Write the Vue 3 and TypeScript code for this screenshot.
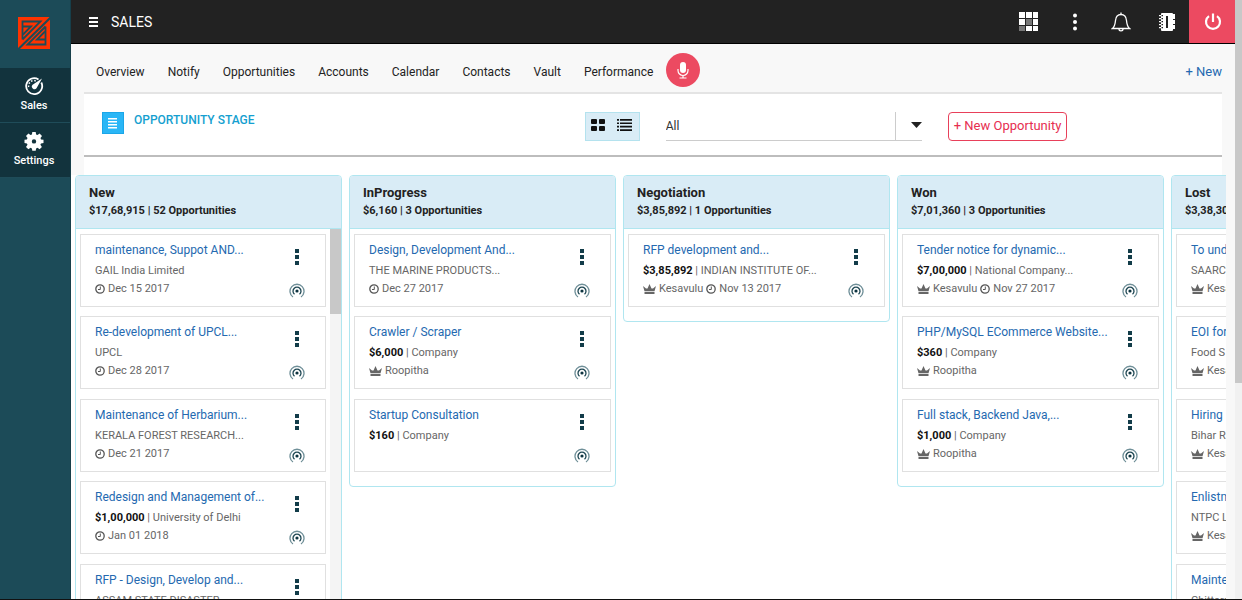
<script setup lang="ts">
import { ref } from 'vue'

interface Deal {
  title: string
  amount?: string
  company: string
  owner?: string
  date?: string
}
interface Stage {
  name: string
  summary: string
  scrolls?: boolean
  deals: Deal[]
}

const tabs = ['Overview', 'Notify', 'Opportunities', 'Accounts', 'Calendar', 'Contacts', 'Vault', 'Performance']
const filter = ref('All')

const stages: Stage[] = [
  {
    name: 'New',
    summary: '$17,68,915 | 52 Opportunities',
    scrolls: true,
    deals: [
      { title: 'maintenance, Suppot AND...', company: 'GAIL India Limited', date: 'Dec 15 2017' },
      { title: 'Re-development of UPCL...', company: 'UPCL', date: 'Dec 28 2017' },
      { title: 'Maintenance of Herbarium...', company: 'KERALA FOREST RESEARCH...', date: 'Dec 21 2017' },
      { title: 'Redesign and Management of...', amount: '$1,00,000', company: 'University of Delhi', date: 'Jan 01 2018' },
      { title: 'RFP - Design, Develop and...', company: 'ASSAM STATE DISASTER' },
    ],
  },
  {
    name: 'InProgress',
    summary: '$6,160 | 3 Opportunities',
    deals: [
      { title: 'Design, Development And...', company: 'THE MARINE PRODUCTS...', date: 'Dec 27 2017' },
      { title: 'Crawler / Scraper', amount: '$6,000', company: 'Company', owner: 'Roopitha' },
      { title: 'Startup Consultation', amount: '$160', company: 'Company' },
    ],
  },
  {
    name: 'Negotiation',
    summary: '$3,85,892 | 1 Opportunities',
    deals: [
      { title: 'RFP development and...', amount: '$3,85,892', company: 'INDIAN INSTITUTE OF...', owner: 'Kesavulu', date: 'Nov 13 2017' },
    ],
  },
  {
    name: 'Won',
    summary: '$7,01,360 | 3 Opportunities',
    deals: [
      { title: 'Tender notice for dynamic...', amount: '$7,00,000', company: 'National Company...', owner: 'Kesavulu', date: 'Nov 27 2017' },
      { title: 'PHP/MySQL ECommerce Website...', amount: '$360', company: 'Company', owner: 'Roopitha' },
      { title: 'Full stack, Backend Java,...', amount: '$1,000', company: 'Company', owner: 'Roopitha' },
    ],
  },
  {
    name: 'Lost',
    summary: '$3,38,30',
    deals: [
      { title: 'To und', company: 'SAARC', owner: 'Kesavulu' },
      { title: 'EOI for', company: 'Food S', owner: 'Kesavulu' },
      { title: 'Hiring', company: 'Bihar R', owner: 'Kesavulu' },
      { title: 'Enlistm', company: 'NTPC L', owner: 'Kesavulu' },
      { title: 'Mainte', company: 'Chittara' },
    ],
  },
]
</script>

<template>
  <div class="app">
    <aside class="side">
      <a class="logo" href="#" aria-label="Home">
        <svg width="32" height="32" viewBox="0 0 32 32">
          <path fill="#ff3300" d="M0 0H32V32H0Z" />
          <path fill="none" stroke="#1c4b58" stroke-width="2" d="M33 0L0 32.500" />
          <path fill="none" stroke="#1c4b58" stroke-width="1.800" d="M4.500 22.500V4.500H22.500L4.500 22.500M27.500 9.500V27.500H9.500L27.500 9.500" />
          <path fill="none" stroke="#1c4b58" stroke-width="1.800" d="M5 9.500H13L5 17.500M27 22.500H19L27 14.500" />
        </svg>
      </a>
      <nav class="side-nav">
        <a class="side-item" href="#">
          <svg width="20" height="20" viewBox="0 0 20 20" fill="none" stroke="#fff">
            <path stroke-width="1.800" d="M17.300 6.500A8 8 0 1 1 14.500 3.400" />
            <path stroke-width="1.500" stroke-dasharray="1.500 1.700" d="M4.700 11A5.300 5.300 0 0 1 12.500 5.300" />
            <path fill="#fff" stroke="none" d="M18 2.500L12.500 12.300A2.600 2.600 0 1 1 8.600 8.700Z" />
          </svg>
          <span>Sales</span>
        </a>
        <a class="side-item" href="#">
          <svg width="20" height="20" viewBox="0 0 20 20">
            <path fill="#fff" fill-rule="evenodd" d="M8.300 1h3.400l.4 2.500 1.400.6L15.600 2.600 18 5l-1.500 2.100.5 1.300 2.500.4v3.200l-2.500.4-.6 1.400L17.900 16l-2.300 2.300-2.100-1.500-1.400.6-.4 2.400H8.300l-.4-2.400-1.400-.6-2.100 1.500L2 16l1.500-2.200-.6-1.400-2.400-.4V8.800l2.400-.4.6-1.300L2 5l2.400-2.400 2.100 1.500 1.400-.6ZM10 8.200a2.200 2.200 0 1 0 0 4.400 2.200 2.200 0 0 0 0-4.400Z" />
          </svg>
          <span>Settings</span>
        </a>
      </nav>
    </aside>

    <div class="body">
      <header class="top">
        <button class="bare burger" aria-label="Menu">
          <svg width="10" height="10" viewBox="0 0 10 10" fill="#fff"><path d="M0 0h9v2H0zM0 4h9v2H0zM0 8h9v2H0z" /></svg>
        </button>
        <h1>SALES</h1>
        <div class="tools">
          <button class="bare tool" aria-label="Apps">
            <svg width="20" height="20" viewBox="0 0 20 20">
              <path fill="#fff" d="M0 0h6v6H0zM7 0h6v6H7zM14 0h5v6h-5zM0 7h6v6H0zM14 7h5v6h-5zM7 14h6v5H7zM14 14h5v5h-5z" />
              <path fill="#777" d="M7 7h6v6H7zM0 14h6v5H0z" />
            </svg>
          </button>
          <button class="bare tool" aria-label="More">
            <svg width="6" height="18" viewBox="0 0 6 18" fill="#fff"><circle cx="3" cy="2.500" r="2" /><circle cx="3" cy="9" r="2" /><circle cx="3" cy="15.500" r="2" /></svg>
          </button>
          <button class="bare tool" aria-label="Notifications">
            <svg width="20" height="20" viewBox="0 0 20 20" fill="none" stroke="#fff" stroke-width="1.300">
              <path d="M1.500 16.500H18.500C16 14.500 15.800 12 15.500 8.500C15.200 5 13 2.500 10 2.500S4.800 5 4.500 8.500C4.200 12 4 14.500 1.500 16.500Z" />
              <path d="M10 2.500V.5M8 17C8 19.500 12 19.500 12 17" />
            </svg>
          </button>
          <button class="bare tool" aria-label="Contacts book">
            <svg width="18" height="20" viewBox="0 0 18 20">
              <rect x="3" y="1" width="12" height="18" rx="1" fill="#fff" />
              <path fill="#fff" d="M1 3h3v1.300H1zM1 6h3v1.300H1zM1 9h3v1.300H1zM1 12h3v1.300H1zM1 15h3v1.300H1zM15 2h2v5h-2zM15 8h2v4h-2zM15 13h2v4h-2z" />
              <path fill="#222" d="M3.500 3h1.500v1.300H3.500zM3.500 6h1.500v1.300H3.500zM3.500 9h1.500v1.300H3.500zM3.500 12h1.500v1.300H3.500zM3.500 15h1.500v1.300H3.500zM8 4h2v12h-2z" />
            </svg>
          </button>
          <button class="bare tool power" aria-label="Sign out">
            <svg width="20" height="20" viewBox="0 0 20 20" fill="none" stroke="#fff" stroke-width="2.200"><path d="M6 4.200A7 7 0 1 0 14 4.200M10 1.500V10" /></svg>
          </button>
        </div>
      </header>

      <nav class="tabs">
        <a v-for="tab in tabs" :key="tab" href="#">{{ tab }}</a>
        <button class="bare mic" aria-label="Voice">
          <svg width="12" height="17" viewBox="0 0 12 17"><rect x="3" y="0" width="6" height="11" rx="3" fill="#fff" /><path fill="none" stroke="#fff" stroke-width="1.200" d="M1 7V8.500A5 5 0 0 0 11 8.500V7M6 13.500V16M2.500 16H9.500" /></svg>
        </button>
        <a class="new" href="#">+ New</a>
      </nav>

      <section class="panel">
        <div class="heading">
          <span class="badge">
            <svg width="10" height="11" viewBox="0 0 10 11" fill="#fff"><path d="M0 0h9v1.500H0zM0 3h9v1.500H0zM0 6h9v1.500H0zM0 9h9v1.500H0z" /></svg>
          </span>
          <h2>OPPORTUNITY STAGE</h2>
        </div>
        <div class="controls">
          <div class="views">
            <button class="bare" aria-label="Board view">
              <svg width="14" height="12" viewBox="0 0 14 12" fill="#111"><rect width="6" height="5" rx="1" /><rect x="8" width="6" height="5" rx="1" /><rect y="7" width="6" height="5" rx="1" /><rect x="8" y="7" width="6" height="5" rx="1" /></svg>
            </button>
            <button class="bare" aria-label="List view">
              <svg width="15" height="12" viewBox="0 0 15 12" fill="#111"><path d="M0 0h2v1.700H0zM3 0h12v1.700H3zM0 3.400h2v1.700H0zM3 3.400h12v1.700H3zM0 6.800h2v1.700H0zM3 6.800h12v1.700H3zM0 10.200h2v1.700H0zM3 10.200h12v1.700H3z" /></svg>
            </button>
          </div>
          <div class="picker">
            <select v-model="filter" aria-label="Filter opportunities">
              <option>All</option>
            </select>
            <span class="caret"><svg width="11" height="6" viewBox="0 0 11 6"><path fill="#222" d="M0 0H11L5.500 6Z" /></svg></span>
          </div>
          <button class="add">+ New Opportunity</button>
        </div>
      </section>

      <main class="board">
        <section v-for="stage in stages" :key="stage.name" class="stage">
          <header class="stage-head">
            <h3>{{ stage.name }}</h3>
            <p>{{ stage.summary }}</p>
          </header>
          <div class="stage-body">
            <div class="cards">
              <article v-for="deal in stage.deals" :key="deal.title" class="card">
                <div class="info">
                  <a class="title" href="#">{{ deal.title }}</a>
                  <p class="company"><template v-if="deal.amount"><b>{{ deal.amount }}</b> | </template>{{ deal.company }}</p>
                  <p class="meta">
                    <span v-if="deal.owner">
                      <svg width="13" height="10" viewBox="0 0 13 10" fill="#666"><path d="M0 2L3 4.500 4.500 4.500 6.500 0 8.500 4.500 10 4.500 13 2 11.500 7.200H1.500ZM1.500 8h10v2h-10z" /></svg>
                      {{ deal.owner }}
                    </span>
                    <span v-if="deal.date">
                      <svg width="10" height="10" viewBox="0 0 10 10" fill="none" stroke="#555"><circle cx="5" cy="5" r="4.200" stroke-width="1.300" /><path d="M5.300 2.500V5.500H3" /></svg>
                      {{ deal.date }}
                    </span>
                  </p>
                </div>
                <div class="actions">
                  <button class="bare" aria-label="Card menu">
                    <svg width="4" height="16" viewBox="0 0 4 16" fill="#123c49"><path d="M0 0h4v4H0zM0 6h4v4H0zM0 12h4v4H0z" /></svg>
                  </button>
                  <button class="bare" aria-label="Activity">
                    <svg width="16" height="16" viewBox="0 0 16 16" fill="none" stroke-width="1.300">
                      <path stroke="#6f8f98" d="M4 14A7 7 0 1 1 12 14" />
                      <path stroke="#1d4652" d="M5.500 11.300A4 4 0 1 1 10.500 11.300" />
                      <circle cx="8" cy="8" r="1.600" fill="#0e3440" />
                    </svg>
                  </button>
                </div>
              </article>
            </div>
            <div v-if="stage.scrolls" class="track"><div class="thumb"></div></div>
          </div>
        </section>
      </main>
    </div>

    <div class="page-track"><div class="page-thumb"></div></div>
  </div>
</template>

<style>
body {
  margin: 0;
}
</style>

<style scoped>
* {
  box-sizing: border-box;
}
.app {
  display: flex;
  height: 100vh;
  overflow: hidden;
  background: #fff;
  border-bottom: 1px solid #111;
  color: #222;
  font-family: Roboto, "Liberation Sans", sans-serif;
  font-size: 12px;
}
h1, h2, h3, p {
  margin: 0;
}
a {
  color: inherit;
  text-decoration: none;
}
svg {
  display: block;
  flex: none;
}
.bare {
  display: flex;
  align-items: center;
  justify-content: center;
  padding: 0;
  border: 0;
  background: none;
}
.side {
  flex: 0 0 71px;
  background: #1c4b58;
  border-right: 1px solid #173f4a;
}
.logo {
  display: flex;
  justify-content: center;
  padding: 17px 2px 19px 0;
}
.side-item {
  display: flex;
  flex-direction: column;
  align-items: center;
  gap: 2px;
  height: 55px;
  padding: 8px 2px 0 0;
  background: #12333d;
  border-bottom: 1px solid #1f4c59;
  color: #fff;
  font-size: 11px;
  font-weight: 500;
  line-height: 16px;
}
.body {
  display: flex;
  flex: 1;
  flex-direction: column;
  min-width: 0;
  background: #f8f8f8;
}
.top {
  display: flex;
  flex: 0 0 44px;
  align-items: center;
  padding-left: 18px;
  background: #222;
  border-bottom: 1px solid #000;
  color: #fff;
}
h1 {
  margin-left: 12px;
  font-size: 14px;
  font-weight: 400;
  line-height: 20px;
}
.tools {
  display: flex;
  align-self: stretch;
  margin-left: auto;
}
.tool {
  width: 46px;
  padding-left: 2px;
}
.power {
  background: #ec4a61;
}
.tabs {
  display: flex;
  flex: 0 0 50px;
  align-items: center;
  gap: 23px;
  margin: 0 13px;
  padding: 8px 0 0 12px;
  border-bottom: 2px solid #e4e4e4;
  font-size: 12px;
  line-height: 20px;
}
.tabs .mic {
  width: 34px;
  height: 34px;
  margin: -4px 0 0 -10px;
  border-radius: 50%;
  background: #ec4a61;
}
.new {
  margin-left: auto;
  color: #2469b0;
  font-size: 13px;
}
.panel {
  display: grid;
  flex: 0 0 63px;
  grid-template-columns: 44fr 56fr;
  margin: 0 13px;
  padding-top: 18px;
  background: #fff;
  border-bottom: 2px solid #bdbdbd;
}
.heading {
  display: flex;
  gap: 10px;
  padding-left: 18px;
}
.badge {
  display: flex;
  align-items: center;
  justify-content: center;
  width: 22px;
  height: 22px;
  background: #29b6f6;
  border: 1px solid #1ba6e8;
}
h2 {
  color: #159fd0;
  font-size: 12px;
  font-weight: 500;
  line-height: 16px;
}
.controls {
  display: flex;
  align-items: flex-start;
  gap: 26px;
}
.views {
  display: flex;
  width: 55px;
  height: 29px;
  background: #d9ecf6;
  border: 1px solid #b4e2ee;
}
.views button {
  flex: 1;
  padding: 0 1px 4px 0;
}
.picker {
  display: flex;
  flex: 0 1 256px;
  position: relative;
  border-bottom: 1px solid #ccc;
}
select {
  width: 100%;
  height: 28px;
  padding: 0;
  appearance: none;
  background: none;
  border: 0;
  color: #333;
  font: inherit;
  font-size: 12px;
}
.caret {
  display: flex;
  position: absolute;
  top: 0;
  right: 0;
  bottom: 0;
  align-items: center;
  justify-content: flex-end;
  width: 27px;
  padding-bottom: 2px;
  border-left: 1px solid #ccc;
  pointer-events: none;
}
.add {
  height: 29px;
  padding: 0 5px 2px;
  background: #fff;
  border: 1px solid #e8405a;
  border-radius: 4px;
  color: #e62e50;
  font-family: inherit;
  font-size: 13px;
}
.board {
  display: grid;
  flex: 1;
  grid-auto-columns: 267px;
  grid-auto-flow: column;
  gap: 7px;
  align-items: start;
  min-height: 0;
  margin-right: 9px;
  padding: 18px 0 0 4px;
  overflow: hidden;
  background: linear-gradient(#fff, #fff) 13px 0 / calc(100% - 17px) 18px no-repeat, linear-gradient(#fff, #fff) 0 18px no-repeat;
}
.stage {
  background: #fff;
  border: 1px solid #b0e6f0;
  border-radius: 4px;
}
.stage-head {
  height: 53px;
  padding: 8px 13px 0;
  background: #d9ecf6;
  border-bottom: 1px solid #b0e6f0;
  border-radius: 3px 3px 0 0;
  font-weight: 700;
}
h3 {
  font-size: 13px;
  line-height: 18px;
}
.stage-head p {
  font-size: 11px;
  line-height: 17px;
}
.stage-body {
  display: flex;
}
.cards {
  flex: 1;
  min-width: 0;
  padding: 5px 4px;
}
.card {
  display: flex;
  min-height: 73px;
  margin-bottom: 9px;
  padding: 5px 20px 0 14px;
  border: 1px solid #e0e0e0;
}
.card:nth-child(even) {
  margin-bottom: 10px;
}
.info {
  flex: 1;
  min-width: 0;
  color: #666;
  white-space: nowrap;
}
.title {
  display: block;
  color: #2469b0;
  font-size: 12px;
  line-height: 21px;
}
.company {
  font-size: 11px;
  line-height: 20px;
}
.company b {
  color: #111;
}
.meta,
.meta span {
  display: flex;
  align-items: center;
  gap: 3px;
  font-size: 11px;
  line-height: 16px;
}
.actions {
  display: flex;
  flex-direction: column;
  align-items: center;
  gap: 18px;
  padding-top: 9px;
}
.track {
  width: 11px;
  background: #f4f4f4;
}
.thumb {
  height: 85px;
  background: #c8c8c8;
}
.page-track {
  flex: 0 0 7px;
  background: #f1f1f1;
}
.page-thumb {
  height: 64%;
  background: #c8c8c8;
}
</style>
